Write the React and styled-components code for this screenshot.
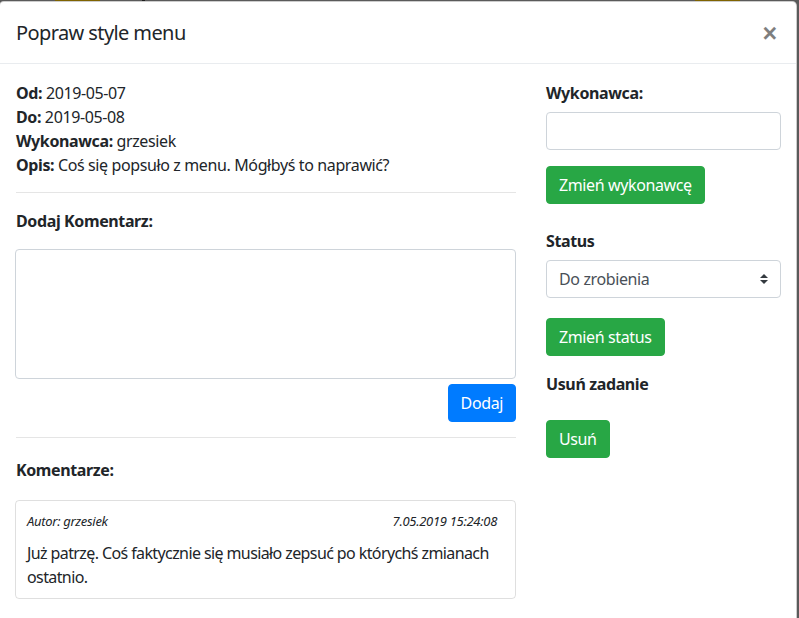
import React from "react";
import styled, { createGlobalStyle } from "styled-components";

const GlobalStyle = createGlobalStyle`
  html, body {
    margin: 0;
    padding: 0;
    height: 100%;
    overflow: hidden;
  }
  body {
    background: linear-gradient(
      to right,
      #5a5a5a 0, #5a5a5a 55px, #7f6300 55px, #7f6300 100px,
      #5a5a5a 100px, #5a5a5a 142px, #1e1e1e 142px, #1e1e1e 145px,
      #5a5a5a 145px, #5a5a5a 695px, #7f6300 695px, #7f6300 740px,
      #5a5a5a 740px
    ) top / 100% 1px no-repeat, #5a5a5a;
    font-family: "Noto Sans", "Open Sans", sans-serif;
    font-size: 16px;
    line-height: 1.5;
    letter-spacing: -0.38px;
    color: #212529;
  }
`;

const Modal = styled.div`
  margin: 1px 2px 0 -1px;
  height: 640px;
  background: #fff;
  border: 1px solid rgba(0, 0, 0, 0.2);
  border-radius: 4.8px;
  box-sizing: border-box;
`;

const Header = styled.div`
  display: flex;
  align-items: flex-start;
  justify-content: space-between;
  padding: 16px 16px 15px 16px;
  border-bottom: 1px solid #e9ecef;
`;

const Title = styled.h5`
  margin: 0;
  font-size: 20px;
  font-weight: 400;
  letter-spacing: -0.6px;
  line-height: 1.5;
`;

const Close = styled.button`
  padding: 0 3px 0 0;
  margin: 0;
  border: 0;
  background: transparent;
  font-family: "Liberation Sans", sans-serif;
  font-size: 25px;
  font-weight: 700;
  line-height: 30px;
  color: #000;
  opacity: 0.5;
  text-shadow: 0 1px 0 #fff;
  cursor: pointer;
`;

const Body = styled.div`
  display: grid;
  grid-template-columns: 500px 1fr;
  column-gap: 30px;
  padding: 17px 15px 16px 16px;
`;

const Column = styled.div`
  display: flex;
  flex-direction: column;
`;

const Info = styled.p`
  margin: 0;
`;

const Rule = styled.hr`
  margin: 15px 0 16px;
  border: 0;
  border-top: 1px solid rgba(0, 0, 0, 0.1);
  width: 100%;
`;

const Label = styled.label`
  display: block;
  font-weight: 700;
  margin-top: ${(p) => p.$top || 0}px;
  margin-bottom: ${(p) => p.$bottom || 8}px;
`;

const TextArea = styled.textarea`
  display: block;
  box-sizing: border-box;
  width: calc(100% + 1px);
  margin-left: -1px;
  height: 130px;
  margin-top: 7px;
  border: 1px solid #ced4da;
  border-radius: 4px;
  resize: none;
  font: inherit;
  padding: 6px 12px;
`;

const Actions = styled.div`
  display: flex;
  justify-content: flex-end;
  margin-top: 5px;
`;

const Button = styled.button`
  box-sizing: border-box;
  height: 38px;
  padding: 0 12px;
  border: 1px solid ${(p) => (p.$variant === "primary" ? "#007bff" : "#28a745")};
  border-radius: 4px;
  background: ${(p) => (p.$variant === "primary" ? "#007bff" : "#28a745")};
  color: #fff;
  font-family: inherit;
  font-size: 16px;
  letter-spacing: inherit;
  line-height: 1.5;
  cursor: pointer;
  align-self: flex-start;
  margin-top: ${(p) => p.$top || 0}px;
`;

const Input = styled.input`
  box-sizing: border-box;
  width: 100%;
  height: 38px;
  margin: 0;
  border: 1px solid #ced4da;
  border-radius: 4px;
  padding: 6px 12px;
  font: inherit;
`;

const SelectBox = styled.div`
  position: relative;
  box-sizing: border-box;
  height: 38px;
  border: 1px solid #ced4da;
  border-radius: 4px;
  padding: 5px 12px;
  color: #495057;
  display: flex;
  align-items: center;
`;

const SelectArrow = styled.svg`
  position: absolute;
  right: 12px;
  top: 50%;
  transform: translateY(-50%);
`;

const Card = styled.div`
  box-sizing: border-box;
  width: calc(100% + 1px);
  margin-left: -1px;
  margin-top: 8px;
  border: 1px solid rgba(0, 0, 0, 0.125);
  border-radius: 4px;
  padding: 10px 10px 9px 11px;
`;

const Meta = styled.div`
  display: flex;
  justify-content: space-between;
  font-size: 13px;
  font-style: italic;
  letter-spacing: -0.3px;
  line-height: 20px;
  margin: 0 8px 10px 0;
`;

const CommentText = styled.p`
  margin: 0;
  letter-spacing: -0.6px;
`;

export default function App() {
  return (
    <>
      <GlobalStyle />
      <Modal>
        <Header>
          <Title>Popraw style menu</Title>
          <Close aria-label="Close">×</Close>
        </Header>
        <Body>
          <Column>
            <Info><b>Od:</b> 2019-05-07</Info>
            <Info><b>Do:</b> 2019-05-08</Info>
            <Info><b>Wykonawca:</b> grzesiek</Info>
            <Info><b>Opis:</b> Coś się popsuło z menu. Mógłbyś to naprawić?</Info>
            <Rule />
            <Label $bottom={9}>Dodaj Komentarz:</Label>
            <TextArea />
            <Actions>
              <Button $variant="primary">Dodaj</Button>
            </Actions>
            <Rule />
            <Label $top={4} $bottom={10}>Komentarze:</Label>
            <Card>
              <Meta>
                <span>Autor: grzesiek</span>
                <span>7.05.2019 15:24:08</span>
              </Meta>
              <CommentText>
                Już patrzę. Coś faktycznie się musiało zepsuć po którychś zmianach ostatnio.
              </CommentText>
            </Card>
          </Column>
          <Column>
            <Label $bottom={7}>Wykonawca:</Label>
            <Input />
            <Button $top={16}>Zmień wykonawcę</Button>
            <Label $top={25} $bottom={7}>Status</Label>
            <SelectBox>
              Do zrobienia
              <SelectArrow width="8" height="10" viewBox="0 0 8 10">
                <path d="M4 0 L8 4 H0 Z M0 6 H8 L4 10 Z" fill="#343a40" />
              </SelectArrow>
            </SelectBox>
            <Button $top={20}>Zmień status</Button>
            <Label $top={16} $bottom={24}>Usuń zadanie</Label>
            <Button>Usuń</Button>
          </Column>
        </Body>
      </Modal>
    </>
  );
}
